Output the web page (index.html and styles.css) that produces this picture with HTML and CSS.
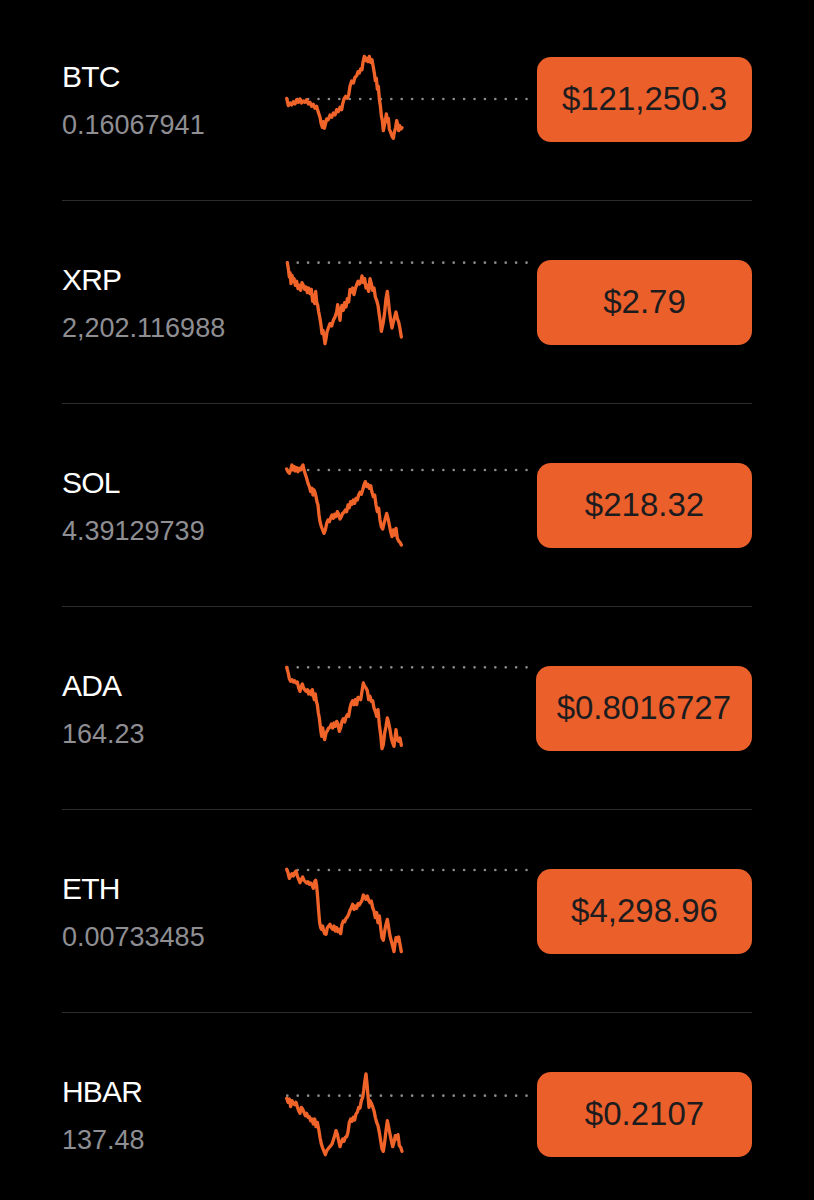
FILE: index.html
```html
<!DOCTYPE html>
<html lang="en">
<head>
    <meta charset="UTF-8">
    <meta name="viewport" content="width=device-width, initial-scale=1.0">
    <title>Holdings</title>
    <link rel="stylesheet" href="styles.css">
</head>
<body>
    <main class="holdings">
        <div class="holding">
            <div class="asset">
                <div class="asset-symbol">BTC</div>
                <div class="asset-amount">0.16067941</div>
            </div>
            <svg class="spark" viewBox="0 0 780 300">
                <line class="spark-base" x1="52" y1="150" x2="770" y2="150"/>
                <polyline class="spark-line" points="50,148 55,170 60,162 65,168 70,158 75,165 80,152 85,160 90,150 95,162 100,156 105,160 110,152 115,165 120,160 125,172 130,166 135,178 140,172 145,190 150,205 153,222 157,235 160,218 163,238 167,222 170,210 175,212 180,198 185,205 190,192 195,198 200,182 205,188 210,175 215,182 218,165 222,150 227,142 232,148 236,138 240,112 245,96 250,102 255,85 260,80 264,68 268,72 272,60 276,62 279,40 283,22 287,35 291,28 294,38 298,22 302,40 306,32 310,55 313,72 316,95 319,88 322,120 325,112 328,150 331,170 334,200 337,215 340,245 343,230 346,215 349,195 352,218 355,208 358,240 362,250 366,262 370,268 373,250 377,235 380,215 383,225 386,245 389,230 393,240 396,236"/>
            </svg>
            <div class="price">$121,250.3</div>
        </div>

        <div class="holding">
            <div class="asset">
                <div class="asset-symbol">XRP</div>
                <div class="asset-amount">2,202.116988</div>
            </div>
            <svg class="spark" viewBox="0 0 780 300">
                <line class="spark-base" x1="52" y1="32" x2="770" y2="32"/>
                <polyline class="spark-line" points="52,32 55,50 58,75 60,62 63,95 66,70 69,88 72,80 76,100 80,88 84,110 88,100 92,115 96,92 100,100 104,112 108,105 112,122 116,108 120,125 124,112 128,148 131,130 134,155 137,118 140,150 143,160 146,180 150,200 153,220 156,245 159,235 162,252 165,275 168,260 171,240 175,228 180,215 185,222 190,205 195,195 200,180 203,158 206,180 210,205 213,170 216,160 220,175 224,152 228,165 232,140 236,150 240,112 244,120 248,108 252,128 256,110 260,98 264,88 268,96 272,90 276,72 280,92 284,80 288,108 292,100 296,118 300,80 304,95 308,115 312,108 316,135 320,145 324,160 328,190 331,210 334,238 337,225 340,210 344,180 348,140 352,118 355,145 358,175 362,205 366,228 370,210 374,195 378,180 382,200 386,210 390,230 394,255"/>
            </svg>
            <div class="price">$2.79</div>
        </div>

        <div class="holding">
            <div class="asset">
                <div class="asset-symbol">SOL</div>
                <div class="asset-amount">4.39129739</div>
            </div>
            <svg class="spark" viewBox="0 0 780 300">
                <line class="spark-base" x1="52" y1="45" x2="770" y2="45"/>
                <polyline class="spark-line" points="50,42 54,50 58,55 62,45 66,30 70,45 73,35 76,48 80,38 84,50 88,40 92,45 96,35 99,30 102,45 106,58 110,70 114,85 118,95 122,110 126,100 129,120 132,105 135,112 138,125 141,140 144,150 147,180 150,200 154,215 158,225 162,235 166,225 170,205 174,195 178,200 182,188 186,180 190,190 194,178 198,185 202,170 206,178 210,192 214,185 218,175 222,172 226,165 230,170 234,150 238,158 242,140 246,148 250,135 254,145 258,130 262,135 266,120 270,112 274,118 278,105 282,90 286,80 290,95 294,88 298,100 302,92 306,112 310,125 314,120 318,150 322,170 326,160 330,195 334,215 338,222 342,205 346,190 350,175 354,190 358,210 362,230 366,245 370,225 374,240 378,220 382,250 386,258 390,262 394,270"/>
            </svg>
            <div class="price">$218.32</div>
        </div>

        <div class="holding">
            <div class="asset">
                <div class="asset-symbol">ADA</div>
                <div class="asset-amount">164.23</div>
            </div>
            <svg class="spark" viewBox="0 0 780 300">
                <line class="spark-base" x1="52" y1="28" x2="770" y2="28"/>
                <polyline class="spark-line" points="50,28 54,42 58,62 62,70 66,65 70,72 74,68 78,75 82,72 86,90 90,100 94,85 97,78 100,88 104,95 108,100 112,95 116,108 120,100 124,110 127,95 130,112 133,125 136,108 139,130 142,140 145,165 148,180 152,215 155,235 158,210 161,230 164,245 168,225 172,218 176,210 180,208 184,198 188,210 192,195 196,205 200,190 204,198 208,220 212,210 216,190 220,182 224,192 228,178 232,170 236,175 240,150 244,135 248,128 252,140 256,125 260,140 264,118 268,120 272,125 276,100 280,75 284,85 288,90 292,98 296,125 300,115 304,130 308,128 312,150 316,160 320,175 324,155 328,200 332,230 336,272 340,260 344,225 348,205 352,180 356,195 360,215 364,240 368,255 372,265 375,240 378,215 382,245 386,250 390,240 394,262"/>
            </svg>
            <div class="price">$0.8016727</div>
        </div>

        <div class="holding">
            <div class="asset">
                <div class="asset-symbol">ETH</div>
                <div class="asset-amount">0.00733485</div>
            </div>
            <svg class="spark" viewBox="0 0 780 300">
                <line class="spark-base" x1="52" y1="27" x2="770" y2="27"/>
                <polyline class="spark-line" points="50,25 54,35 58,52 62,45 66,38 70,45 74,35 78,30 82,45 86,55 90,65 94,55 98,48 102,58 106,62 110,66 114,62 118,70 122,66 126,72 130,82 134,62 137,58 140,75 143,110 146,150 149,185 152,200 155,205 158,195 161,210 164,218 168,220 172,200 176,195 180,190 184,200 188,205 192,195 196,210 200,200 204,212 208,205 212,218 216,190 220,180 224,182 228,172 232,168 236,160 240,148 244,140 248,130 252,145 256,135 260,142 264,128 268,132 272,125 276,118 280,102 284,108 288,115 292,105 296,118 300,125 304,120 308,140 312,150 316,170 320,155 324,185 328,165 332,200 336,230 340,238 344,210 348,190 352,175 356,200 360,225 364,240 368,255 372,272 375,248 378,230 382,240 386,228 390,250 394,272"/>
            </svg>
            <div class="price">$4,298.96</div>
        </div>

        <div class="holding">
            <div class="asset">
                <div class="asset-symbol">HBAR</div>
                <div class="asset-amount">137.48</div>
            </div>
            <svg class="spark" viewBox="0 0 780 300">
                <line class="spark-base" x1="52" y1="95" x2="770" y2="95"/>
                <polyline class="spark-line" points="50,103 54,115 58,105 62,128 66,110 70,118 74,122 78,115 82,128 86,140 90,148 94,130 98,135 102,145 106,155 110,148 114,160 118,158 122,170 126,165 130,180 134,165 138,188 142,175 146,195 150,220 154,240 158,252 162,262 166,272 170,260 174,255 178,250 182,245 186,240 190,228 194,215 198,200 202,210 206,230 210,248 214,235 218,225 222,232 226,220 230,218 234,205 238,175 242,165 246,172 250,160 254,168 258,150 262,145 266,130 270,132 274,110 278,100 281,80 284,55 288,30 291,60 294,95 297,130 300,110 304,118 308,128 312,140 316,160 320,175 324,185 328,205 332,230 336,255 340,262 344,235 348,200 352,170 356,190 360,210 364,230 368,248 372,235 376,215 380,225 384,212 388,245 392,250 396,262"/>
            </svg>
            <div class="price">$0.2107</div>
        </div>
    </main>
</body>
</html>
```

FILE: styles.css
```css
* { box-sizing: border-box; margin: 0; padding: 0; }
body {
    font-family: 'Liberation Sans', Arial, sans-serif;
    background-color: #000;
    color: #fff;
}
.holdings {
    margin: -2px 62px 0;
}
.holding {
    display: flex;
    align-items: center;
    height: 203px;
    border-bottom: 1px solid #2c2c2e;
}
.asset {
    align-self: flex-start;
    width: 208px;
    padding-top: 59px;
}
.asset-symbol {
    font-size: 30px;
    line-height: 40px;
    letter-spacing: -0.8px;
    color: #fff;
}
.asset-amount {
    font-size: 27px;
    line-height: 40px;
    margin-top: 8px;
    color: #8e8e93;
}
.spark {
    width: 260px;
    height: 100px;
    flex-shrink: 0;
}
.spark-base {
    stroke: #8a8a8a;
    stroke-width: 8;
    stroke-linecap: round;
    stroke-dasharray: 0 31.2;
}
.spark-line {
    fill: none;
    stroke: #f0642a;
    stroke-width: 10;
    stroke-linejoin: round;
    stroke-linecap: round;
}
.price {
    margin-left: auto;
    min-width: 215px;
    height: 85px;
    padding: 0 21px;
    border-radius: 14px;
    background-color: #eb5f2b;
    color: #1c1c1e;
    font-size: 33px;
    display: flex;
    align-items: center;
    justify-content: center;
}
```
